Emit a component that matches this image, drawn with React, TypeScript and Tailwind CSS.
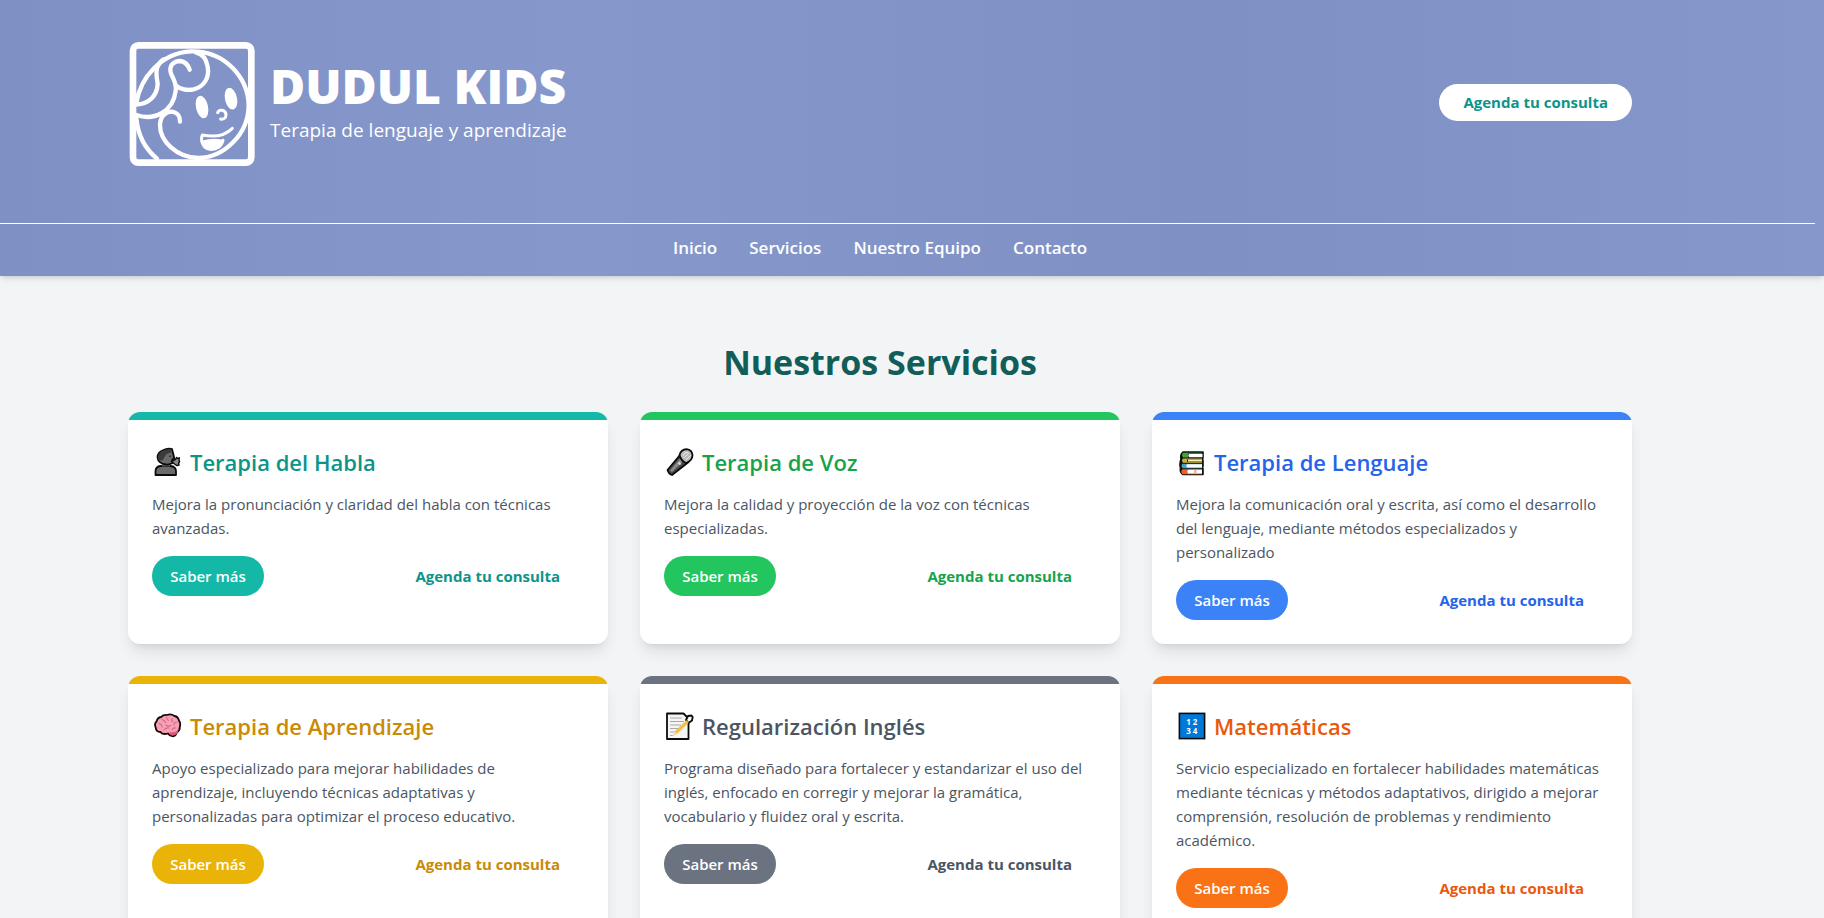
import type { ReactNode } from "react";

type Service = {
  title: string;
  text: string;
  icon: ReactNode;
  bar: string;
  color: string;
};

const iconClass = "h-[30px] w-[30px] shrink-0";

const SpeakingIcon = () => (
  <svg viewBox="0 0 30 30" className={iconClass} aria-hidden="true" stroke="#0b0b0b" strokeWidth="1.8" strokeLinejoin="round">
    <path d="M3.500 28v-3.500q0-5 5-5.500h10q5.500.5 5.500 5.500V28z" fill="#6b6b6b" />
    <path d="M10 15h8v4.500h-8z" fill="#5a5a5a" stroke="none" />
    <path d="M12 2.800q5-1.800 8-.8l1.500 6 .8 3.500-1.800.8-.3 4q-3 1.500-6 1.200-8-1-8.700-7Q5.500 5 12 2.800z" fill="#6b6b6b" />
    <path d="M6 11q0-6.500 6.500-8 4-1.300 7-.6v3q-5 .8-6.500 3.600L11.500 12q-1.500 2-3 1.500Q6 13 6 11z" fill="#3b3b3b" stroke="none" />
    <circle cx="18" cy="9.300" r=".8" fill="#111" stroke="none" />
    <path d="M19.500 14l4-1.500 1-2 1 .8 1.800-.5-.3 2.200.6 1.500-1 1.500.4 2-2 .6-2.500-1.600z" fill="#8a8a8a" strokeWidth="1.400" />
  </svg>
);

const MicIcon = () => (
  <svg viewBox="0 0 30 30" className={iconClass} aria-hidden="true" stroke="#0b0b0b" strokeWidth="1.800" strokeLinejoin="round">
    <path d="M3.500 23L16 8l8 7.500L8 28q-2-.5-3-2t-1.500-3z" fill="#4a4a4a" />
    <path d="M6 23.500L17 10.500l3 3L8 25z" fill="#8a8a8a" stroke="none" />
    <path d="M15.500 8Q17 2.500 22.500 2.200q5.500.5 6 6-.2 5.500-6.500 7.800-5-2-6.500-8z" fill="#b9b9b9" />
    <path d="M19 9q1-4 5-4M20 11l5-5M22 13l5-5" fill="none" stroke="#e9e9e9" strokeWidth="1" />
    <path d="M14.500 15.500l2 2" stroke="#ddd" strokeWidth="2" />
  </svg>
);

const BooksIcon = () => (
  <svg viewBox="0 0 30 30" className={iconClass} aria-hidden="true" strokeLinejoin="round">
    <path d="M7 5h20v6l-.5 1 .5 1.500v5.500l-.5 1.500.5 1v6H7q-3.500-2-2.500-6.500Q3.200 17 5 12q-1-4.500 2-7z" fill="#111" stroke="#111" strokeWidth="1.600" />
    <path d="M7 5.800h19v1H12v3.700H7q-2-2.500 0-4.700z" fill="#3fa62e" />
    <path d="M13 7h13.500v3.200H13q-1.500-1.600 0-3.200z" fill="#fff" />
    <path d="M7 11.500h19v1H11v2.300h15v.9H7q-2-2.200 0-4.200z" fill="#c8b23c" />
    <path d="M12 12.600h14v1.900H12z" fill="#f4efb6" />
    <path d="M6.500 16.800H26v4.400H6.500q-2-2.200 0-4.400z" fill="#4d9cc4" />
    <path d="M11 17.200h15v3.400H11q-1.500-1.700 0-3.400z" fill="#fff" />
    <path d="M6.500 22.300H26v5H6.500q-2.500-2.500 0-5z" fill="#e8622c" />
    <path d="M12 22.800h14v3.800H12q-1.500-2 0-3.800z" fill="#fff" />
    <path d="M18 22.800h2.500v3.800H18z" fill="#f3b49b" />
  </svg>
);

const BrainIcon = () => (
  <svg viewBox="0 0 30 30" className={iconClass} aria-hidden="true" strokeLinejoin="round" strokeLinecap="round">
    <path
      d="M9 6q3-2.800 6-2 4-1.500 7.500 1 3.500.5 4.500 4.500 2 3 .8 6.500.2 3.500-3 5.500-1 3.500-4 3.800Q17.500 25 16 22.500 10 24 8.500 21 4 21 3.700 16.500 2 13 4.500 10.500 5.500 6.500 9 6z"
      fill="#f6a0b4"
      stroke="#160a0d"
      strokeWidth="1.800"
    />
    <path d="M16 21.500q5 .5 10.500-2-1.500 5-6 5-2-.5-4.500-3z" fill="#e0577c" />
    <path d="M10 8.500q2 .5 3.500 3M14.500 6q0 2.500 2 3.500M20 7.500q-1 2 1 3.500M25 11q-3 0-3 3M7 12.500q3 .5 3 3.500M14 14q2 2 5 .5M12 19q2-2.500 5-2M20 19q1-2.500 4-2" fill="none" stroke="#d96886" strokeWidth="1.100" />
  </svg>
);

const MemoIcon = () => (
  <svg viewBox="0 0 30 30" className={iconClass} aria-hidden="true" strokeLinejoin="round">
    <path d="M3 2.500h16.500l5 5V28H3z" fill="#f5f5f5" stroke="#0b0b0b" strokeWidth="1.800" />
    <path d="M6 7h12M6 10.500h14M6 14h11M6 17.500h8M6 21h5M6 24.500h3" stroke="#a9a9a9" strokeWidth="1" />
    <path d="M24 5l3.500-.5 1.200 1.500L28 9.500l-3.500 2.500-2.500-3z" fill="#fff" stroke="#0b0b0b" strokeWidth="1.800" />
    <path d="M22.500 9.200l2.200 2.200L13 23l-4.500 2 2-4.500z" fill="#f2bf4a" />
    <path d="M10.500 20.500L8.500 25l4.500-2z" fill="#f6dfae" />
  </svg>
);

const NumbersIcon = () => (
  <svg viewBox="0 0 30 30" className={iconClass} aria-hidden="true">
    <rect x="3.400" y="2.400" width="25.200" height="25.200" fill="#0078d7" stroke="#0b0b0b" strokeWidth="1.600" />
    <g fill="#fff" fontFamily="Open Sans, sans-serif" fontWeight="700" fontSize="8" textAnchor="middle">
      <text x="12.500" y="14">1</text>
      <text x="19" y="14">2</text>
      <text x="12.500" y="23">3</text>
      <text x="19" y="23">4</text>
    </g>
  </svg>
);

const Logo = () => (
  <svg viewBox="9 6 390 384" className="h-32 w-[130px] shrink-0" role="img" aria-label="Dudul Kids" fill="none" stroke="#fff" strokeWidth="13" strokeLinecap="round" strokeLinejoin="round">
    <rect x="24" y="22" width="355" height="352" rx="16" strokeWidth="20" />
    <path d="M34 196C46 118 110 44 198 40 300 38 368 118 371 200c0 92-78 160-152 160-64-2-114-50-114-98 0-26 16-41 35-41 18 2 26 16 25 30" />
    <path d="M34 240c4 48 26 92 62 122" />
    <path d="M34 231c52 18 110-8 118-72 4-22-6-34-14-52-8-26 10-38 28-38 16 2 24 14 28 26" />
    <path d="M152 142c12 12 36 16 54 12 32-8 48-36 42-68-4-24-18-38-34-42" />
    <path d="M98 84c-8 18-2 36 0 54-2 34-24 60-64 62" />
    <path d="M100 82c4-10 8-14 16-18" />
    <ellipse cx="231" cy="207" rx="15" ry="31" transform="rotate(-12 231 207)" fill="#fff" strokeWidth="6" />
    <ellipse cx="318" cy="182" rx="15" ry="30" transform="rotate(-12 318 182)" fill="#fff" strokeWidth="6" />
    <path d="M278 224c4-12 24-9 25 6 0 10-8 15-16 13" strokeWidth="9" />
    <path d="M322 271c-20 20-52 28-90 20-6 14 0 40 22 43 22 2 36-10 40-27" strokeWidth="9" />
    <path d="M234 310c18-6 40-6 56-3-4 18-18 26-36 25-14-2-19-12-20-22z" fill="#fff" strokeWidth="5" />
  </svg>
);

const services: Service[] = [
  {
    title: "Terapia del Habla",
    text: "Mejora la pronunciación y claridad del habla con técnicas avanzadas.",
    icon: <SpeakingIcon />,
    bar: "bg-[#14b8a6]",
    color: "text-[#0d9488]",
  },
  {
    title: "Terapia de Voz",
    text: "Mejora la calidad y proyección de la voz con técnicas especializadas.",
    icon: <MicIcon />,
    bar: "bg-[#22c55e]",
    color: "text-[#16a34a]",
  },
  {
    title: "Terapia de Lenguaje",
    text: "Mejora la comunicación oral y escrita, así como el desarrollo del lenguaje, mediante métodos especializados y personalizado",
    icon: <BooksIcon />,
    bar: "bg-[#3b82f6]",
    color: "text-[#2563eb]",
  },
  {
    title: "Terapia de Aprendizaje",
    text: "Apoyo especializado para mejorar habilidades de aprendizaje, incluyendo técnicas adaptativas y personalizadas para optimizar el proceso educativo.",
    icon: <BrainIcon />,
    bar: "bg-[#eab308]",
    color: "text-[#ca8a04]",
  },
  {
    title: "Regularización Inglés",
    text: "Programa diseñado para fortalecer y estandarizar el uso del inglés, enfocado en corregir y mejorar la gramática, vocabulario y fluidez oral y escrita.",
    icon: <MemoIcon />,
    bar: "bg-[#6b7280]",
    color: "text-[#4b5563]",
  },
  {
    title: "Matemáticas",
    text: "Servicio especializado en fortalecer habilidades matemáticas mediante técnicas y métodos adaptativos, dirigido a mejorar comprensión, resolución de problemas y rendimiento académico.",
    icon: <NumbersIcon />,
    bar: "bg-[#f97316]",
    color: "text-[#ea580c]",
  },
];

const navItems = ["Inicio", "Servicios", "Nuestro Equipo", "Contacto"];

function ServiceCard({ service }: { service: Service }) {
  return (
    <article className="overflow-hidden rounded-xl bg-white shadow-lg">
      <div className={`h-2 ${service.bar}`} />
      <div className="p-6">
        <h3 className={`flex h-9 items-center gap-2 text-[22px] font-semibold whitespace-nowrap ${service.color}`}>
          {service.icon}
          {service.title}
        </h3>
        <p className="mt-3 pr-1 text-[15px] leading-6 text-[#4b5563]">{service.text}</p>
        <div className="mt-4 flex items-center justify-between">
          <button type="button" className={`h-10 w-28 rounded-full text-[15px] font-semibold text-white ${service.bar}`}>
            Saber más
          </button>
          <a href="#contacto" className={`px-6 text-[15px] font-bold ${service.color}`}>
            Agenda tu consulta
          </a>
        </div>
      </div>
    </article>
  );
}

export default function App() {
  return (
    <div className="h-screen overflow-hidden bg-[#f3f4f6] font-['Open_Sans','Noto_Sans',sans-serif]">
      <header className="bg-[linear-gradient(90deg,#7f90c5_0%,#8698cb_32%,#7f90c4_66%,#8698cb_100%)] pb-3 text-white shadow-md">
        <div className="pr-16">
          <div className="mx-auto flex h-[223px] max-w-[1504px] items-start justify-between pt-10">
            <div className="flex items-center gap-3">
              <Logo />
              <div>
                <p className="text-[48px] leading-12 font-extrabold">DUDUL KIDS</p>
                <p className="mt-1 text-[19px] leading-8">Terapia de lenguaje y aprendizaje</p>
              </div>
            </div>
            <a href="#contacto" className="mt-11 flex h-[37px] items-center rounded-full bg-white px-6 text-[15px] font-bold text-[#0d9488]">
              Agenda tu consulta
            </a>
          </div>
        </div>
        <nav className="mr-[9px] border-t border-white pt-2 pr-[55px]">
          <ul className="flex justify-center gap-8 text-[17px] leading-8 font-semibold">
            {navItems.map((item) => (
              <li key={item}>
                <a href="#inicio">{item}</a>
              </li>
            ))}
          </ul>
        </nav>
      </header>
      <main className="pt-16 pr-16">
        <div className="mx-auto max-w-[1504px]">
          <h2 className="text-center text-[34px] leading-11 font-bold text-[#115e59]">Nuestros Servicios</h2>
          <div className="mt-7 grid grid-cols-3 gap-8">
            {services.map((service) => (
              <ServiceCard key={service.title} service={service} />
            ))}
          </div>
        </div>
      </main>
    </div>
  );
}
